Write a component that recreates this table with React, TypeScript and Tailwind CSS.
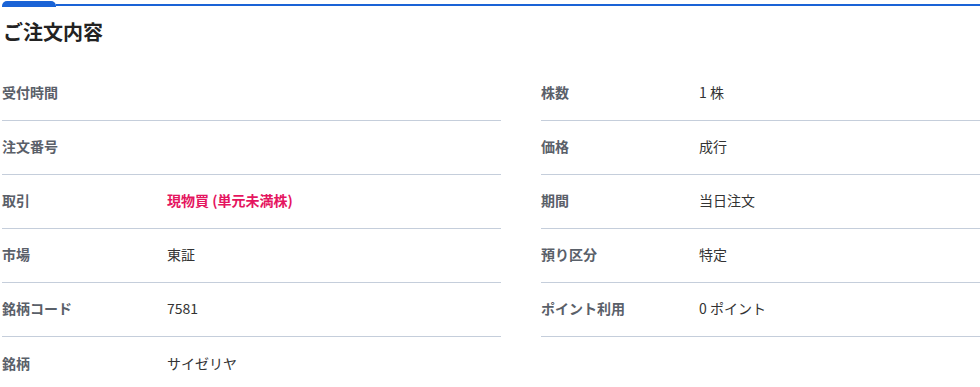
import React from "react";

const left: [string, string, boolean?][] = [
  ["受付時間", ""],
  ["注文番号", ""],
  ["取引", "現物買 (単元未満株)", true],
  ["市場", "東証"],
  ["銘柄コード", "7581"],
  ["銘柄", "サイゼリヤ"],
];
const right: [string, string][] = [
  ["株数", "1 株"],
  ["価格", "成行"],
  ["期間", "当日注文"],
  ["預り区分", "特定"],
  ["ポイント利用", "0 ポイント"],
];

export default function App() {
  return (
    <div
      className="w-[980px] h-[387px] overflow-hidden bg-white"
      style={{ fontFamily: '"Noto Sans CJK JP", "Noto Sans", sans-serif' }}
    >
      <div className="flex items-end h-[7px]">
        <div className="ml-[2px] w-[54px] h-[6px] bg-[#1a63d6] rounded-t-[5px]" />
        <div className="flex-1 h-[2px] bg-[#1a63d6] mb-[1px]" />
      </div>
      <h2 className="mt-[13px] ml-[3px] text-[20px] leading-[24px] font-bold text-[#222]">ご注文内容</h2>
      <div className="flex mt-[23px] pl-[2px]">
        <div className="w-[499px]">
          {left.map(([k, v, red], i) => (
            <div
              key={k}
              className={`flex items-center h-[54px] pb-[2px] ${i < left.length - 1 ? "border-b border-[#c5cedb]" : ""}`}
            >
              <div className="w-[165px] text-[14px] font-bold text-[#5a6069]">{k}</div>
              <div className={`text-[14px] ${red ? "font-bold text-[#e5155f]" : "text-[#333]"}`}>{v}</div>
            </div>
          ))}
        </div>
        <div className="ml-[40px] flex-1">
          {right.map(([k, v]) => (
            <div key={k} className="flex items-center h-[54px] pb-[2px] border-b border-[#c5cedb]">
              <div className="w-[158px] text-[14px] font-bold text-[#5a6069]">{k}</div>
              <div className="text-[14px] text-[#333]">{v}</div>
            </div>
          ))}
        </div>
      </div>
    </div>
  );
}
